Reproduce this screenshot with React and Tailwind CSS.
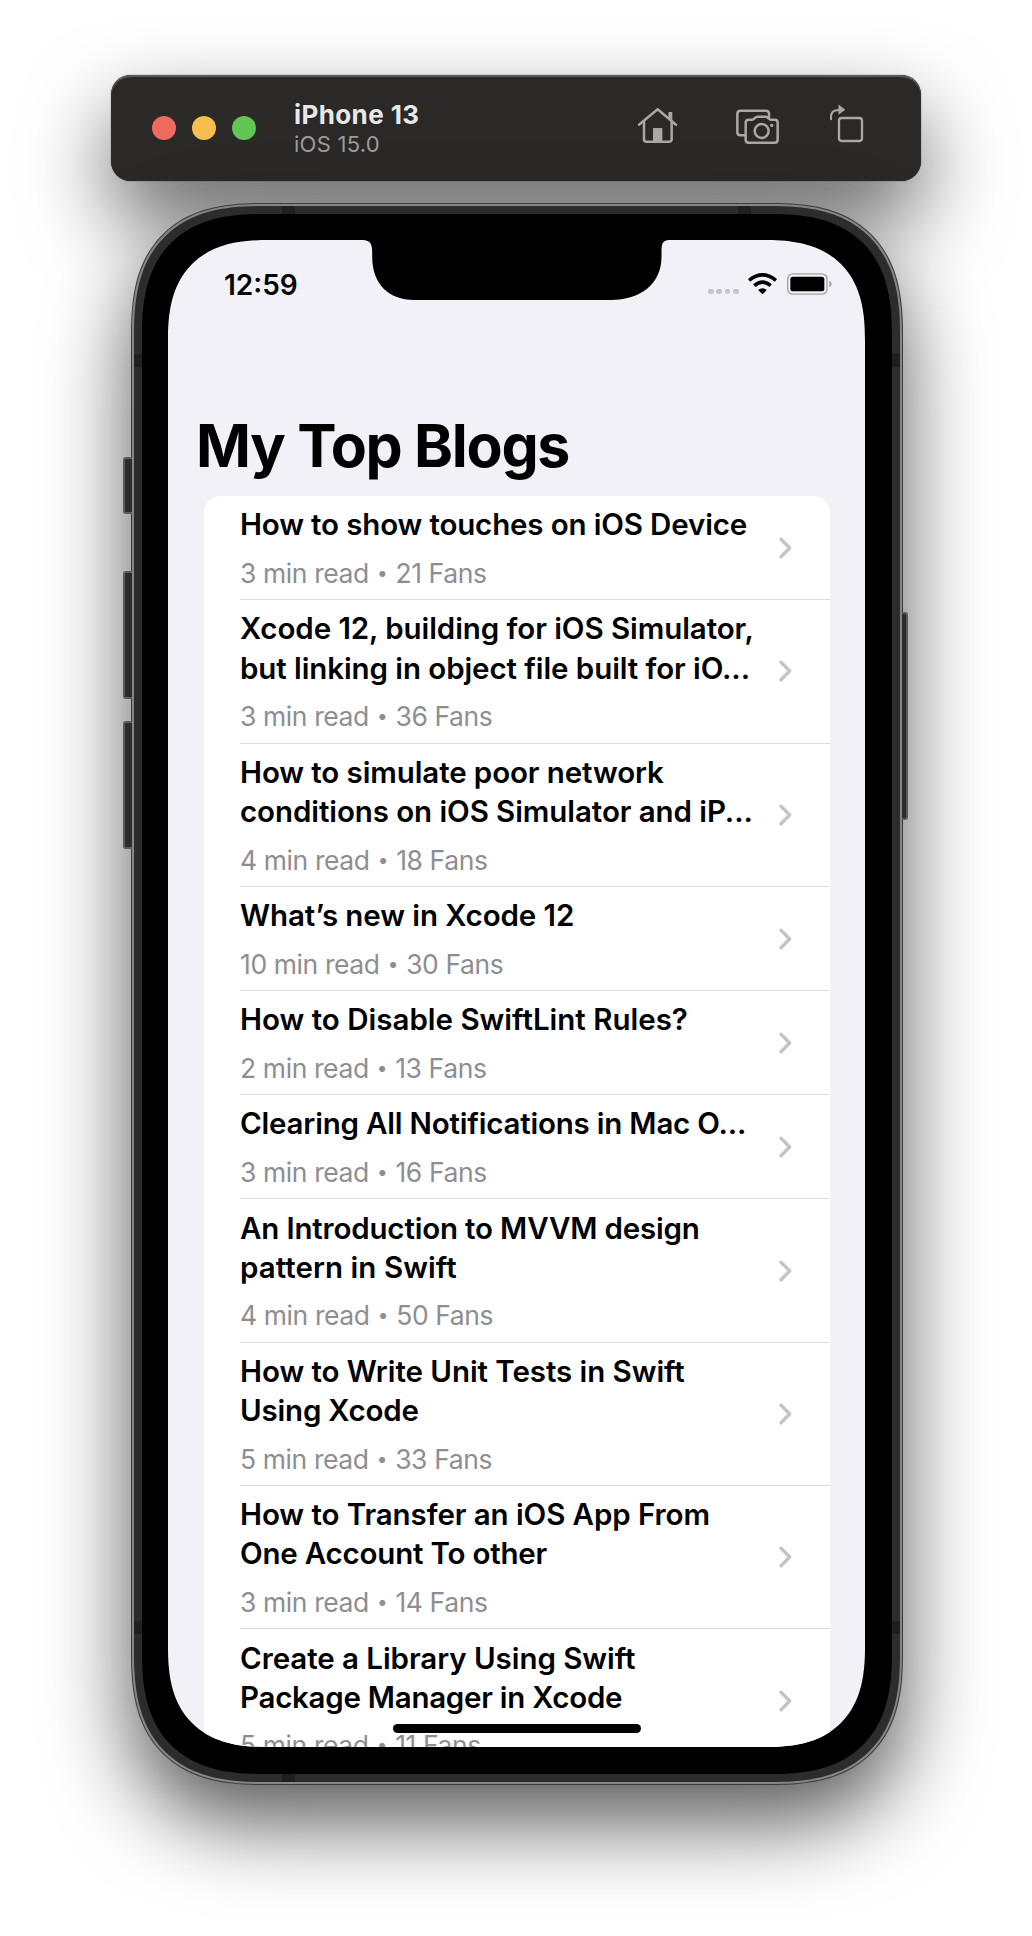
const posts = [
  { lines: [["How to show touches on iOS Device", "tracking-[-0.15px]"]], read: "3 min read", fans: "21 Fans" },
  { lines: [["Xcode 12, building for iOS Simulator,", "tracking-[-0.07px]"], ["but linking in object file built for iO...", "tracking-[-0.08px]"]], read: "3 min read", fans: "36 Fans" },
  { lines: [["How to simulate poor network", "tracking-[-0.1px]"], ["conditions on iOS Simulator and iP...", "tracking-[-0.08px]"]], read: "4 min read", fans: "18 Fans" },
  { lines: [["What’s new in Xcode 12", "tracking-[-0.08px]"]], read: "10 min read", fans: "30 Fans" },
  { lines: [["How to Disable SwiftLint Rules?", "tracking-[0px]"]], read: "2 min read", fans: "13 Fans" },
  { lines: [["Clearing All Notifications in Mac O...", "tracking-[-0.2px]"]], read: "3 min read", fans: "16 Fans" },
  { lines: [["An Introduction to MVVM design", "tracking-[-0.17px]"], ["pattern in Swift", "tracking-[0.05px]"]], read: "4 min read", fans: "50 Fans" },
  { lines: [["How to Write Unit Tests in Swift", "tracking-[-0.06px]"], ["Using Xcode", "tracking-[-0.2px]"]], read: "5 min read", fans: "33 Fans" },
  { lines: [["How to Transfer an iOS App From", "tracking-[-0.08px]"], ["One Account To other", "tracking-[-0.2px]"]], read: "3 min read", fans: "14 Fans" },
  { lines: [["Create a Library Using Swift", "tracking-[-0.06px]"], ["Package Manager in Xcode", "tracking-[-0.27px]"]], read: "5 min read", fans: "11 Fans" },
];

function HomeIcon() {
  return (
    <svg className="h-10 w-[42px]" viewBox="48 48 126 120" fill="none" stroke="#a9a8a6" strokeWidth="7.5" strokeLinecap="round" strokeLinejoin="round">
      <path d="M57 104 L113 58 L168 104" />
      <path d="M72 94 V148 Q72 155 79 155 H148 Q155 155 155 148 V94" />
      <path d="M145 82 V68 Q145 66 147 66 H155 Q157 66 157 68 V94 Z" fill="#a9a8a6" stroke="none" />
      <path d="M99 158 V116 Q99 114 101 114 H125 Q127 114 127 116 V158 Z" fill="#a9a8a6" stroke="none" />
    </svg>
  );
}

function CameraIcon() {
  return (
    <svg className="h-10 w-[46px]" viewBox="342 48 138 120" fill="none" stroke="#a9a8a6" strokeWidth="7.5" strokeLinecap="round" strokeLinejoin="round">
      <path d="M376 136 H361 Q352 136 352 127 V71 Q352 62 361 62 H438 Q447 62 447 71 V82" />
      <path d="M386 89 H397 Q401 89 404 85 Q408 80 413 80 H437 Q442 80 445 85 Q448 89 452 89 H464 Q473 89 473 98 V149 Q473 158 464 158 H386 Q377 158 377 149 V98 Q377 89 386 89 Z" />
      <circle cx="425" cy="123" r="21" />
      <circle cx="455" cy="106" r="5" fill="#a9a8a6" stroke="none" />
    </svg>
  );
}

function RotateIcon() {
  return (
    <svg className="h-[43px] w-[37px]" viewBox="624 39 111 129" fill="none" stroke="#a9a8a6" strokeWidth="7" strokeLinecap="round" strokeLinejoin="round">
      <rect x="657" y="84" width="69" height="69" rx="8" />
      <path d="M633 88 V81 Q633 60 655 60 H660" strokeWidth="6" />
      <path d="M657 46 L675 59 L657 72 Z" fill="#a9a8a6" strokeWidth="2" />
    </svg>
  );
}

function Chevron() {
  return (
    <svg className="relative top-[-0.700px] h-6 w-4 shrink-0" viewBox="0 0 16 24" fill="none" stroke="#c5c5c7" strokeWidth="3.4" strokeLinecap="round" strokeLinejoin="round">
      <path d="M3 3.200 L11.700 12 L3 20.800" />
    </svg>
  );
}

function Notch() {
  return (
    <svg className="absolute left-[193px] top-0 h-[60px] w-[310px]" viewBox="0 0 310 60">
      <path d="M0 0 H0 C8 0 11.200 2 11.200 12 V17 C11.200 44 28 60 53 60 H250 C279 60 300.500 44 300.500 17 V12 C300.500 2 302 0 310 0 Z" fill="#000" />
    </svg>
  );
}

function StatusBar() {
  return (
    <div className="flex h-[90px] pl-[56px] pt-[26px]">
      <div className="w-[484px] pt-px text-[28px] font-semibold leading-[36px]">12:59</div>
      <div className="flex">
        <div className="flex gap-[2.800px] pt-[22.500px]">
          {[0, 1, 2, 3].map((i) => (
            <span key={i} className="h-[5.600px] w-[5.600px] rounded-[2px] bg-[#c5c4c9]" />
          ))}
        </div>
        <svg className="ml-[9.500px] mt-[6px] h-[24px] w-[29px]" viewBox="176 36 87 72" fill="none" stroke="#000" strokeWidth="10.5">
          <path d="M179 61 Q219.500 28 260 61" />
          <path d="M195 77 Q219.500 56 244 77" />
          <path d="M206.500 90 Q219.500 79 232.500 90 L219.500 103 Z" fill="#000" stroke="none" />
        </svg>
        <svg className="ml-[9.500px] mt-[6px] h-[24px] w-[46px]" viewBox="293 36 138 72">
          <rect x="295" y="41.500" width="118" height="61" rx="15" fill="none" stroke="#a09fa3" strokeWidth="4" />
          <rect x="303" y="50" width="102" height="44" rx="8" fill="#000" />
          <path d="M420 62 Q427 65 427 72 Q427 79 420 82 Z" fill="#a09fa3" />
        </svg>
      </div>
    </div>
  );
}

function Row({ post, first }) {
  return (
    <li className="relative flex items-center pb-[8.100px] pl-[36px] pt-[9.800px]">
      {!first && <span className="absolute left-[36px] right-0 top-[-0.500px] h-px bg-[#dcdcde]" />}
      <div className="w-[538px] whitespace-nowrap">
        {post.lines.map(([text, tracking]) => (
          <p key={text} className="h-[39.200px] text-[29.500px] font-semibold leading-[39.200px] text-black">
            <span className={tracking}>{text}</span>
          </p>
        ))}
        <p className="mt-[11.400px] flex h-[35.700px] text-[26.500px] leading-[35.700px] tracking-[-0.4px] text-[#8e8e92]">
          <span>{post.read}</span>
          <span className="w-[26.500px] text-center text-[19px]">•</span>
          <span>{post.fans}</span>
        </p>
      </div>
      <Chevron />
    </li>
  );
}

function Toolbar() {
  return (
    <header className="ml-[111px] mt-[75px] flex h-[106px] w-[810px] rounded-[20px] bg-[#2a2928] shadow-[inset_0_2px_1px_#5c5c5a,0_38px_84px_rgba(0,0,0,0.6),0_0_1px_#000]">
      <div className="flex gap-4 pl-[41px] pt-[41px]">
        <span className="h-6 w-6 rounded-full bg-[#ee6a5f]" />
        <span className="h-6 w-6 rounded-full bg-[#f5be4f]" />
        <span className="h-6 w-6 rounded-full bg-[#62c655]" />
      </div>
      <div className="ml-[38px] w-[342px] whitespace-nowrap pt-[24px]">
        <h1 className="text-[26px] font-bold leading-[32px] tracking-[0.4px] text-[#e8e8e8]">iPhone 13</h1>
        <p className="text-[22px] leading-[27px] tracking-[0.25px] text-[#9c9b99]">iOS 15.0</p>
      </div>
      <div className="flex items-start pt-[28px]">
        <div className="pt-[3px]"><HomeIcon /></div>
        <div className="ml-[56px] pt-[3px]"><CameraIcon /></div>
        <div className="ml-[48px]"><RotateIcon /></div>
      </div>
    </header>
  );
}

export default function App() {
  return (
    <div className="h-[1936px] w-[1032px] overflow-hidden bg-white font-['Inter','Liberation_Sans',sans-serif] text-black">
      <Toolbar />
      <main className="relative ml-[131px] mt-[22px] h-[1582px] w-[772px]">
        <div className="h-full w-full rounded-[112px] bg-[#3c3c3c] p-px shadow-[0_38px_84px_rgba(0,0,0,0.65)] supports-[corner-shape:squircle]:rounded-[132px] supports-[corner-shape:squircle]:[corner-shape:superellipse(1.35)]">
          <div className="h-full w-full rounded-[111px] bg-[#858585] p-[2px] supports-[corner-shape:squircle]:rounded-[131px] supports-[corner-shape:squircle]:[corner-shape:superellipse(1.35)]">
            <div className="relative h-full w-full overflow-hidden rounded-[109px] bg-[#2c2c2c] p-[8px] supports-[corner-shape:squircle]:rounded-[129px] supports-[corner-shape:squircle]:[corner-shape:superellipse(1.35)]">
              <span className="absolute left-[148px] top-0 h-2 w-[13px] bg-[#1f1f1f]" />
              <span className="absolute left-[604px] top-0 h-2 w-[13px] bg-[#1f1f1f]" />
              <span className="absolute bottom-0 left-[148px] h-2 w-[13px] bg-[#1f1f1f]" />
              <span className="absolute left-0 top-[148px] h-[13px] w-2 bg-[#1f1f1f]" />
              <span className="absolute right-0 top-[148px] h-[13px] w-2 bg-[#1f1f1f]" />
              <span className="absolute left-0 top-[1415px] h-[13px] w-2 bg-[#1f1f1f]" />
              <span className="absolute right-0 top-[1415px] h-[13px] w-2 bg-[#1f1f1f]" />
              <div className="relative h-full w-full rounded-[103px] bg-black px-[26px] pb-[27px] pt-[26px] supports-[corner-shape:squircle]:rounded-[122px] supports-[corner-shape:squircle]:[corner-shape:superellipse(1.35)]">
                <div className="relative h-[1507px] w-[697px] overflow-hidden rounded-[85px] bg-[#f2f1f7] supports-[corner-shape:squircle]:rounded-[101px] supports-[corner-shape:squircle]:[corner-shape:superellipse(1.35)]">
                  <Notch />
                  <StatusBar />
                  <h2 className="ml-[28px] mt-[81px] h-[84.500px] whitespace-nowrap text-[59px] font-bold leading-[70px] tracking-[-1.3px]">My Top Blogs</h2>
                  <ul className="ml-[36px] h-[1252px] w-[625.500px] rounded-t-[17px] bg-white">
                    {posts.map((post, i) => (
                      <Row key={post.lines[0][0]} post={post} first={i === 0} />
                    ))}
                  </ul>
                  <div className="absolute bottom-[14px] left-[225px] h-[9px] w-[248px] rounded-full bg-black" />
                </div>
              </div>
            </div>
          </div>
        </div>
        <div className="absolute left-[-8px] top-[254px] h-[57px] w-[9px] rounded-l-[3px] border-2 border-r-0 border-[#5c5c5c] bg-[#2c2c2c]" />
        <div className="absolute left-[-8px] top-[368px] h-[128px] w-[9px] rounded-l-[3px] border-2 border-r-0 border-[#5c5c5c] bg-[#2c2c2c]" />
        <div className="absolute left-[-8px] top-[518px] h-[128px] w-[9px] rounded-l-[3px] border-2 border-r-0 border-[#5c5c5c] bg-[#2c2c2c]" />
        <div className="absolute right-[-5px] top-[409px] h-[208px] w-[6px] rounded-r-[3px] border-2 border-l-0 border-[#5c5c5c] bg-[#2c2c2c]" />
      </main>
    </div>
  );
}
